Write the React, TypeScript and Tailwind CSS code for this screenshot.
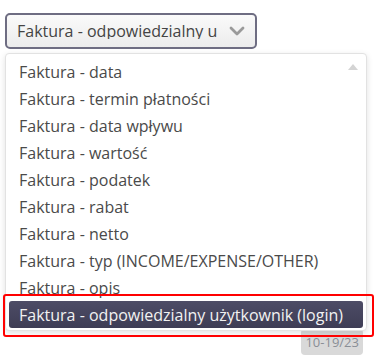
import React from "react";

const items = [
  "Faktura - data",
  "Faktura - termin płatności",
  "Faktura - data wpływu",
  "Faktura - wartość",
  "Faktura - podatek",
  "Faktura - rabat",
  "Faktura - netto",
  "Faktura - typ (INCOME/EXPENSE/OTHER)",
  "Faktura - opis",
  "Faktura - odpowiedzialny użytkownik (login)",
];

export default function App() {
  return (
    <div
      className="relative w-[384px] h-[363px] bg-white"
      style={{ fontFamily: '"Open Sans", sans-serif' }}
    >
      <div className="flex flex-col items-start pt-[13px] pl-[5px]">
        <div className="flex items-center w-[252px] h-[36px] rounded-[5px] border-2 border-[#6e6d82] bg-gradient-to-b from-[#fafafa] to-[#ececec] pl-[10px]">
          <div className="overflow-hidden whitespace-nowrap text-[16px] text-[#444] leading-none w-[200px]">
            Faktura - odpowiedzialny użytkownik (login)
          </div>
          <svg width="16" height="10" viewBox="0 0 16 10" className="ml-[12px]">
            <path d="M2 2 L8 8 L14 2" fill="none" stroke="#9a9a9a" strokeWidth="2.8" strokeLinecap="round" strokeLinejoin="round" />
          </svg>
        </div>
        <div className="flex justify-end w-[358px] mt-[280px]">
          <div className="rounded-[4px] bg-[#d9d9d9] text-[#8a8e96] text-[13px] px-[4px] pt-[7px] pb-[6px] leading-none">
            10-19/23
          </div>
        </div>
      </div>

      <div className="absolute left-[5px] top-[53px] w-[362px] flex flex-col rounded-[4px] border border-[#e2e2e2] bg-white shadow-[0_2px_6px_rgba(0,0,0,0.12)] px-[3px] pt-[4px] pb-[2px]">
        <div className="absolute right-[8px] top-[10px]">
          <svg width="10" height="6" viewBox="0 0 10 6">
            <path d="M0 6 L5 0 L10 6 Z" fill="#d4d4d4" />
          </svg>
        </div>
        {items.map((t, i) => {
          const sel = i === items.length - 1;
          return (
            <div
              key={t}
              className={
                sel
                  ? "h-[27px] flex items-center pl-[10px] rounded-[3px] bg-gradient-to-b from-[#4d4c66] to-[#3e3d55] text-[#f2f2f2] text-[16px] whitespace-nowrap"
                  : "h-[27px] flex items-center pl-[10px] text-[#4a4a4a] text-[16px] whitespace-nowrap"
              }
            >
              {t}
            </div>
          );
        })}
      </div>

      <div className="absolute left-[3px] top-[294px] w-[371px] h-[43px] border-2 border-[#ff0000] rounded-[3px]" />
    </div>
  );
}
